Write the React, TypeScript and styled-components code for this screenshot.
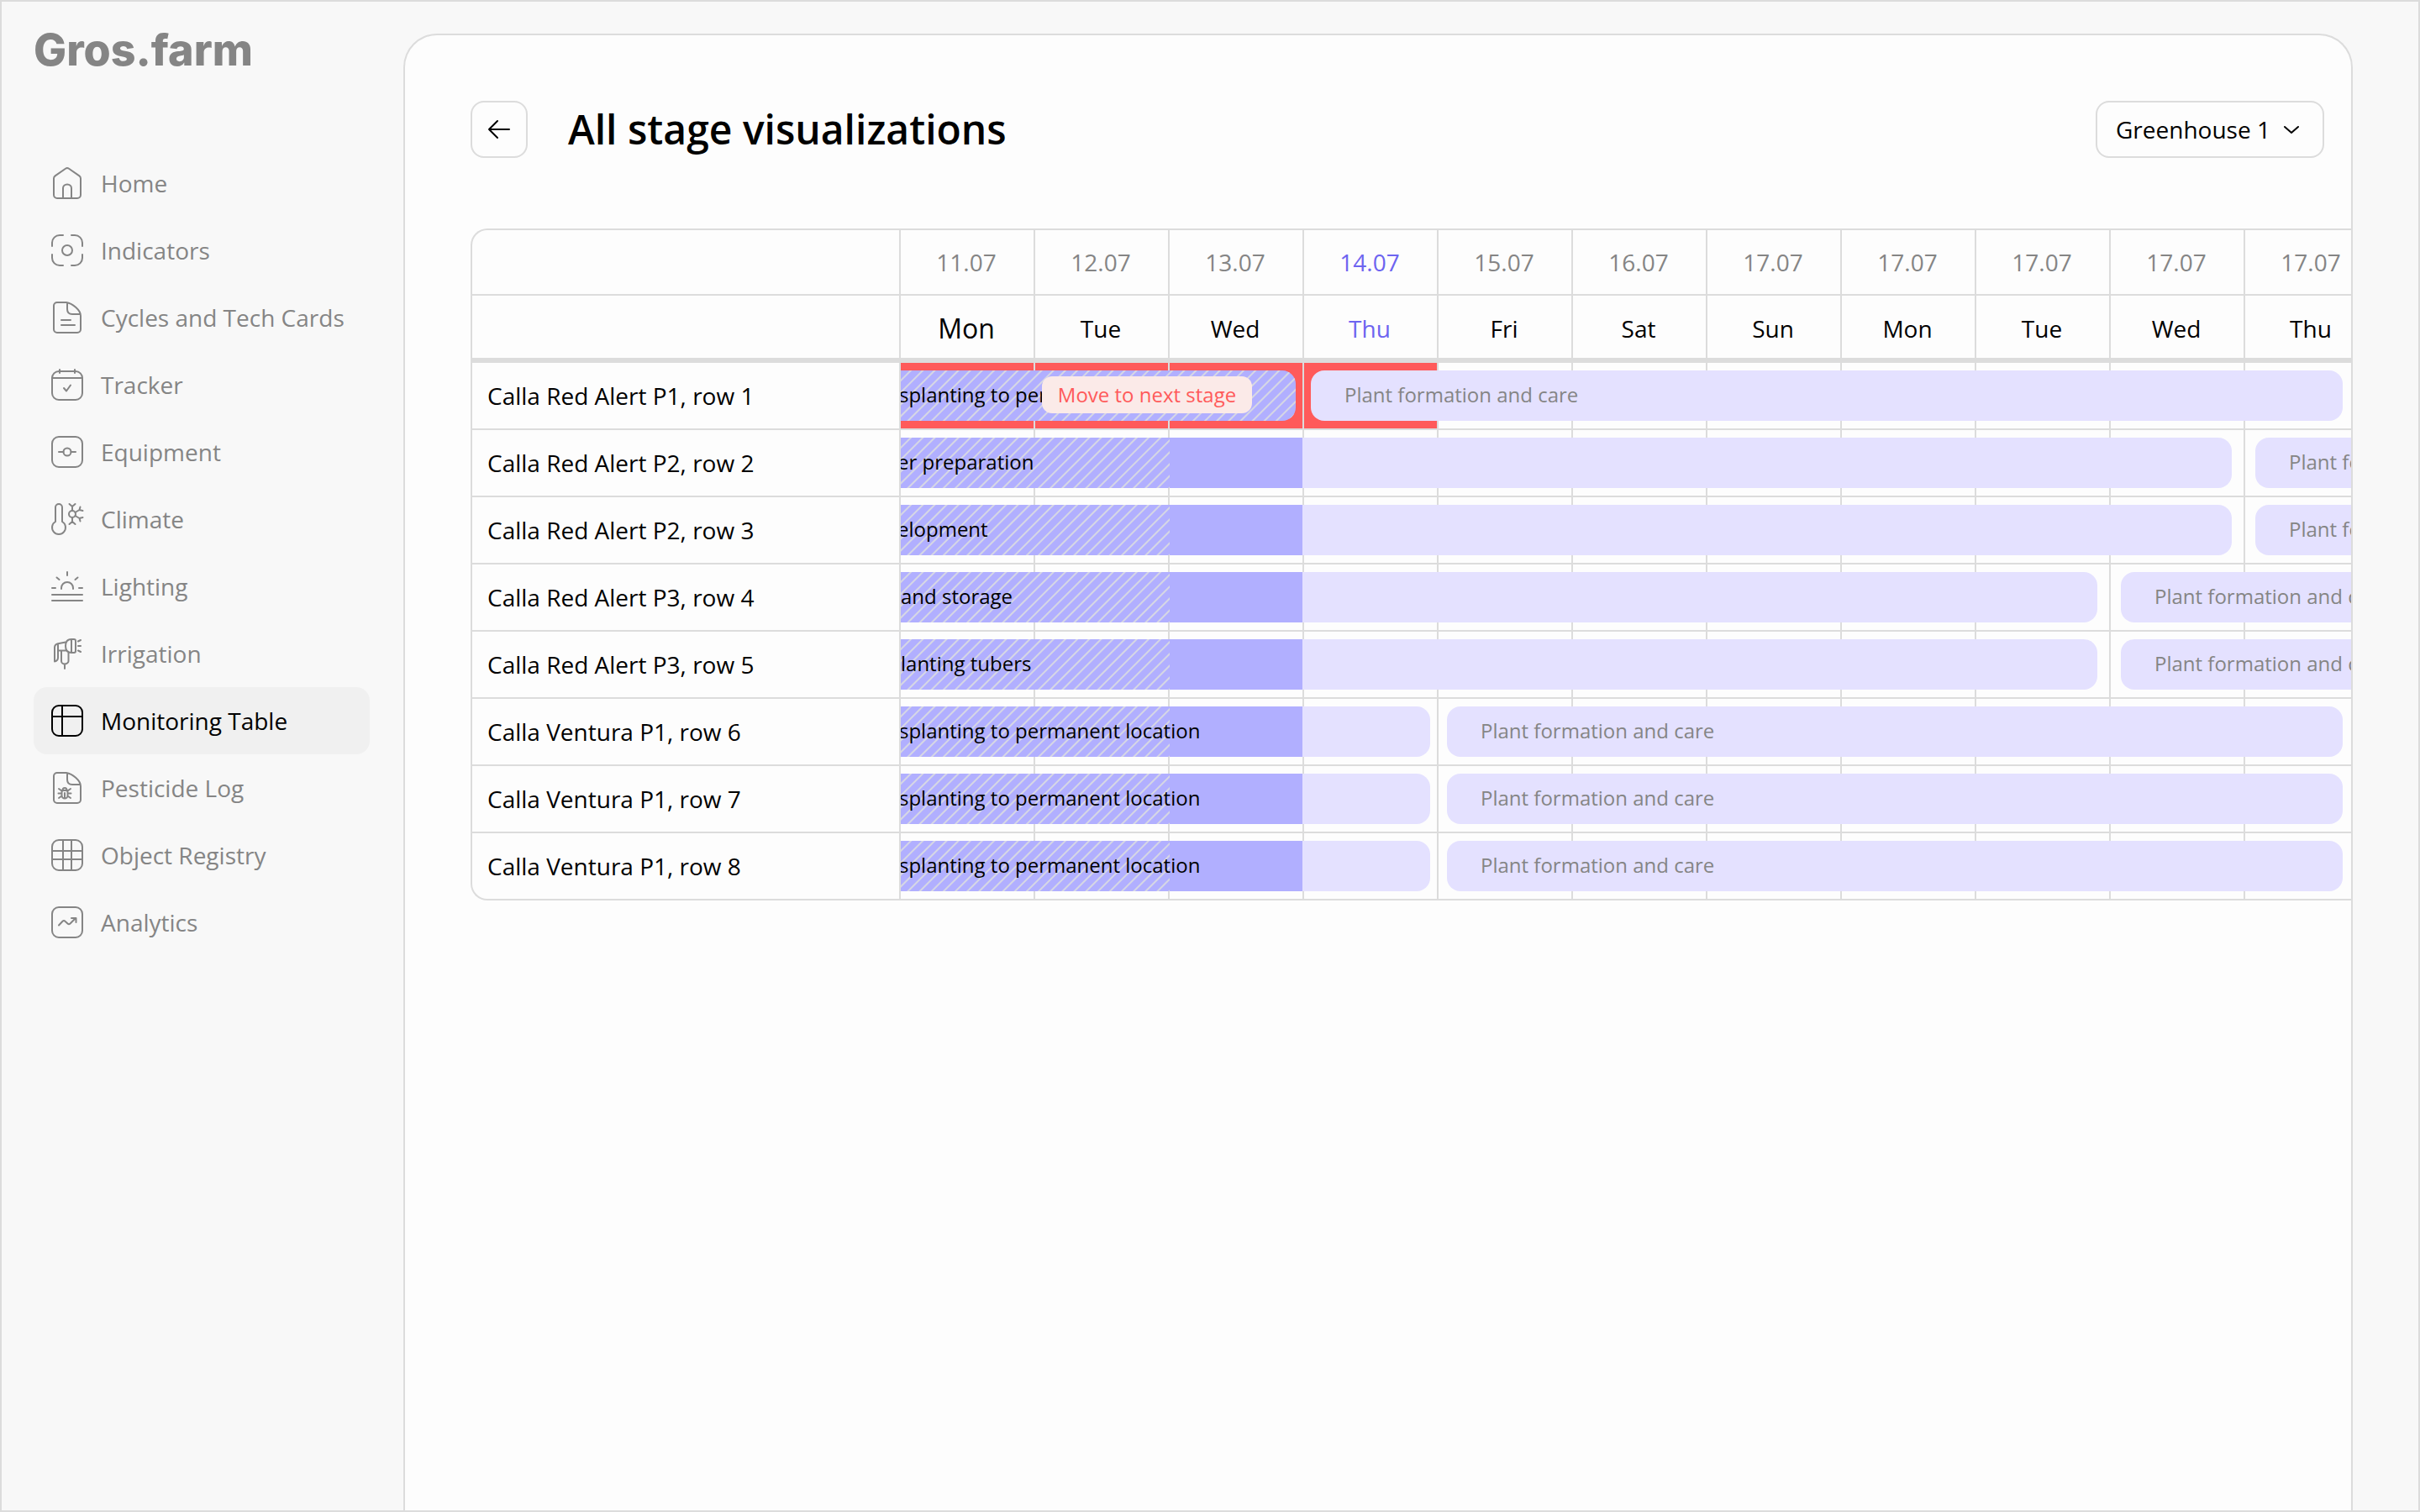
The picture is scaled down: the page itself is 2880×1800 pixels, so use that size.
import React from "react";
import styled, { createGlobalStyle, css } from "styled-components";

const color = {
  page: "#f8f8f8",
  panel: "#fdfdfd",
  line: "#dcdcdc",
  muted: "#858585",
  ink: "#000000",
  active: "#f0f0f0",
  accent: "#6d64f0",
  done: "#b1afff",
  planned: "#e4e1ff",
  alert: "#ff5a5a",
  alertSoft: "#fbeae8",
};

const GlobalStyle = createGlobalStyle`
  *, *::before, *::after { box-sizing: border-box; }
  body {
    margin: 0;
    background: ${color.page};
    color: ${color.ink};
    font-family: "Open Sans", "Noto Sans", sans-serif;
    font-size: 28px;
    line-height: 40px;
  }
  button, select { font: inherit; color: inherit; }
`;

const Shell = styled.div`
  display: flex;
  min-height: 100vh;
  border: 2px solid ${color.line};
  padding: 38px 78px 0 38px;
`;

const Sidebar = styled.aside`
  flex: none;
  width: 400px;
  margin-right: 40px;
`;

const Logo = styled.a`
  display: block;
  margin-bottom: 98px;
  color: ${color.muted};
  font-family: "Inter", sans-serif;
  font-size: 52px;
  font-weight: 800;
  line-height: 40px;
  text-decoration: none;
`;

const NavList = styled.ul`
  margin: 0;
  padding: 0;
  list-style: none;
`;

const NavLink = styled.a<{ $active: boolean }>`
  display: flex;
  align-items: center;
  gap: 20px;
  height: 80px;
  padding: 0 20px;
  border-radius: 16px;
  color: ${(p) => (p.$active ? color.ink : color.muted)};
  background: ${(p) => (p.$active ? color.active : "transparent")};
  text-decoration: none;
`;

const Glyph = styled.svg`
  flex: none;
  fill: none;
  stroke: currentColor;
  stroke-width: 2;
  stroke-linecap: round;
  stroke-linejoin: round;
`;

const Panel = styled.main`
  flex: 1;
  min-width: 0;
  border: 2px solid ${color.line};
  border-bottom: 0;
  border-radius: 40px 40px 0 0;
  background: ${color.panel};
  padding: 78px 0 0 78px;
`;

const PanelHeader = styled.header`
  display: flex;
  align-items: center;
  margin: 0 32px 84px 0;
`;

const BackButton = styled.button`
  display: grid;
  place-items: center;
  width: 68px;
  height: 68px;
  padding: 0;
  border: 2px solid ${color.line};
  border-radius: 16px;
  background: none;
`;

const Title = styled.h1`
  flex: 1;
  margin: 0 0 0 48px;
  font-size: 48px;
  font-weight: 600;
  line-height: 60px;
`;

const SelectBox = styled.label`
  display: grid;
  align-items: center;
  width: 272px;
  height: 68px;
  border: 2px solid ${color.line};
  border-radius: 16px;

  & > * { grid-area: 1 / 1; }
  & > svg { justify-self: end; margin-right: 28px; pointer-events: none; }
`;

const Select = styled.select`
  width: 100%;
  height: 100%;
  padding: 0 60px 0 22px;
  border: 0;
  border-radius: 16px;
  background: none;
  appearance: none;
`;

const TableFrame = styled.div`
  overflow: hidden;
  border: 2px solid ${color.line};
  border-right: 0;
  border-radius: 20px 0 0 20px;
`;

const Table = styled.table`
  table-layout: fixed;
  width: 2270px;
  border-collapse: separate;
  border-spacing: 0;
`;

const NameCol = styled.col`
  width: 510px;
`;

const DayCol = styled.col`
  width: 160px;
`;

const HeadCell = styled.th<{ $tone?: "muted" | "today"; $large?: boolean; $last?: boolean }>`
  height: ${(p) => (p.$last ? 80 : 78)}px;
  padding: ${(p) => (p.$last ? "4px 2px 0 0" : "0 2px 0 0")};
  border-right: 2px solid ${color.line};
  border-bottom: ${(p) => (p.$last ? 6 : 2)}px solid ${color.line};
  color: ${(p) => (p.$tone === "today" ? color.accent : p.$tone === "muted" ? color.muted : color.ink)};
  font-size: ${(p) => (p.$large ? 32 : 28)}px;
  font-weight: 400;
  text-align: center;
`;

const rowLine = css`
  border-bottom: 2px solid ${color.line};
  tr:last-child > & { border-bottom: 0; }
`;

const NameCell = styled.th`
  padding: 0 18px;
  border-right: 2px solid ${color.line};
  font-weight: 400;
  text-align: left;
  white-space: nowrap;
  ${rowLine}
`;

const TrackCell = styled.td`
  padding: 0;
  ${rowLine}
`;

const Track = styled.div`
  display: grid;
  grid-template-columns: repeat(11, 160px);
  align-items: center;
  height: 78px;
  overflow: hidden;
`;

const Slot = styled.div<{ $col: number; $late: boolean }>`
  grid-area: 1 / ${(p) => p.$col};
  height: 100%;
  border-right: 2px solid ${color.line};
  background: ${(p) => (p.$late ? color.alert : "transparent")};
`;

const Bar = styled.div<{ $from: number; $to: number; $inset: string; $round: string }>`
  grid-area: 1 / ${(p) => p.$from} / 2 / ${(p) => p.$to};
  display: grid;
  grid-template-columns: subgrid;
  height: 60px;
  margin: ${(p) => p.$inset};
  border-radius: ${(p) => p.$round};
  overflow: hidden;
  background: ${color.planned};
`;

const Elapsed = styled.div<{ $to: number }>`
  grid-area: 1 / 1 / 2 / ${(p) => p.$to};
  margin-right: 2px;
  background-color: ${color.done};
`;

const Hatched = styled.div<{ $to: number }>`
  grid-area: 1 / 1 / 2 / ${(p) => p.$to};
  background-color: ${color.done};
  background-image: repeating-linear-gradient(
    135deg,
    transparent 0 7px,
    #d6d7e4 8px 9px,
    transparent 10px
  );
`;

const BarContent = styled.div<{ $muted: boolean }>`
  grid-area: 1 / 1 / 2 / -1;
  display: flex;
  align-items: center;
  min-width: 0;
  padding: 0 0 2px ${(p) => (p.$muted ? 40 : 0)}px;
  color: ${(p) => (p.$muted ? color.muted : color.ink)};
  font-size: 24px;
`;

const Label = styled.span<{ $scrolled: number }>`
  flex: 1;
  min-width: 0;
  overflow: hidden;
  text-indent: -${(p) => p.$scrolled}px;
  white-space: nowrap;
`;

const MoveButton = styled.button`
  flex: none;
  width: 250px;
  height: 44px;
  margin-right: 52px;
  padding: 0;
  border: 0;
  border-radius: 12px;
  background: ${color.alertSoft};
  color: ${color.alert};
  line-height: 40px;
  white-space: nowrap;
`;

const docOutline = "M8 2h11c7 1 17 9 17 16v16a4 4 0 0 1-4 4H8a4 4 0 0 1-4-4V6a4 4 0 0 1 4-4zM20 3v7c0 4 2 6 6 6h9";
const box = <rect x="2" y="2" width="36" height="36" rx="8" />;

const nav: { label: string; icon: React.ReactNode }[] = [
  {
    label: "Home",
    icon: <path d="M4 14.500c0-1.400.5-2.300 1.600-3.100L18 2.700a3.400 3.400 0 0 1 4 0l12.400 8.700c1.100.8 1.600 1.700 1.600 3.100V34a4 4 0 0 1-4 4H8a4 4 0 0 1-4-4zM15 38V26a5 4.500 0 0 1 10 0v12" />,
  },
  {
    label: "Indicators",
    icon: (
      <>
        <path d="M2 15v-4a9 9 0 0 1 9-9h4M25 2h4a9 9 0 0 1 9 9v4M38 25v4a9 9 0 0 1-9 9h-4M15 38h-4a9 9 0 0 1-9-9v-4" />
        <circle cx="20" cy="20" r="6" />
      </>
    ),
  },
  { label: "Cycles and Tech Cards", icon: <path d={docOutline + "M13 23h11M13 29h16"} /> },
  {
    label: "Tracker",
    icon: (
      <>
        <rect x="2" y="4" width="36" height="34" rx="8" />
        <path d="M2 12h36M11 2v4M29 2v4M16 24l3 3.500 5-7" />
      </>
    ),
  },
  {
    label: "Equipment",
    icon: (
      <>
        {box}
        <circle cx="20" cy="20" r="4.500" />
        <path d="M10 20h5.500M24.500 20H30" />
      </>
    ),
  },
  {
    label: "Climate",
    icon: (
      <>
        <path d="M6 23V6a4 4 0 0 1 8 0v17a8 8 0 1 1-8 0" />
        <circle cx="26" cy="14" r="4" />
        <path d="M26 10V5M22.500 2 26 5l3.500-3M26 18v5M22.500 26l3.500-3 3.500 3M29.500 12l5-3M35.500 5.500l-1 3.500 4 1M29.500 16l5 3M35.500 22.500l-1-3.500 4-1" />
      </>
    ),
  },
  {
    label: "Lighting",
    icon: <path d="M13 23v-1a7 7 0 0 1 14 0v1M20 3v4M7.500 9.500l3 2.500M32.500 9.500l-3 2.500M2 22h4M34 22h4M2 30h36M2 37h36" />,
  },
  {
    label: "Irrigation",
    icon: <path d="M25 3h3a2 2 0 0 1 2 2v12a2 2 0 0 1-2 2h-3zM25 3c-5 0-7 3.500-7 8s2 8 7 8M18 6.500 9 8.300C6 9 5 10.500 5 13v16.500c2-.5 4-2 4-4.500V8.300M9 16.500h9.500M13 16.500V29c0 2 2 3.500 4 3.500s4.500-1.500 4.500-3.500V18M17 33v5M33 5.500l3-1.500M33 11h3M33 16.500l3 1.500" />,
  },
  {
    label: "Monitoring Table",
    icon: (
      <>
        {box}
        <path d="M14 2v36M2 15h36" />
      </>
    ),
  },
  {
    label: "Pesticide Log",
    icon: <path d={docOutline + "M13.500 25c0-1.500 1-2 2-2h3c1 0 2 .5 2 2v4a3.500 3.500 0 0 1-7 0zM14.500 23a2.500 3 0 0 1 5 0M17 26v6M10 21l3.500 2.500M24 21l-3.500 2.500M9.500 26.500h4M20.500 26.500h4M10 32l3.500-2.500M24 32l-3.500-2.500"} />,
  },
  {
    label: "Object Registry",
    icon: (
      <>
        {box}
        <path d="M15 2v36M25 2v36M2 15h36M2 25h36" />
      </>
    ),
  },
  {
    label: "Analytics",
    icon: (
      <>
        {box}
        <path d="M10 23.500l4.500-4.800c1-1 2-1 3 0l3 2.800c1 .9 2 .9 3 0l6.500-6.500M25 15h5.500v5" />
      </>
    ),
  },
];

const days = [
  ["11.07", "Mon"],
  ["12.07", "Tue"],
  ["13.07", "Wed"],
  ["14.07", "Thu"],
  ["15.07", "Fri"],
  ["16.07", "Sat"],
  ["17.07", "Sun"],
  ["17.07", "Mon"],
  ["17.07", "Tue"],
  ["17.07", "Wed"],
  ["17.07", "Thu"],
];
const today = 3;

type Stage = {
  label: string;
  /* first and last grid lines of the stage */
  from: number;
  to: number;
  /* gap kept before and after the bar, in pixels */
  before?: number;
  after?: number;
  /* part of the label that is scrolled out of view, in pixels */
  scrolled?: number;
  state: "late" | "current" | "next";
};

const next = "Plant formation and care";
const moving = "splanting to permanent location";

const short = (name: string) => ({
  name,
  stages: [
    { label: moving, from: 1, to: 5, after: 10, scrolled: 2, state: "current" },
    { label: next, from: 5, to: 12, before: 10, after: 44, state: "next" },
  ] as Stage[],
});

const long = (name: string, label: string, end: number, scrolled = 0) => ({
  name,
  stages: [
    { label, from: 1, to: end, after: 16, scrolled, state: "current" },
    { label: next, from: end, to: 12, before: 12, state: "next" },
  ] as Stage[],
});

const rows: { name: string; stages: Stage[]; late?: number }[] = [
  {
    name: "Calla Red Alert P1, row 1",
    late: 4,
    stages: [
      { label: moving, from: 1, to: 4, after: 10, scrolled: 2, state: "late" },
      { label: next, from: 4, to: 12, before: 8, after: 44, state: "next" },
    ],
  },
  long("Calla Red Alert P2, row 2", "er preparation", 11, 4),
  long("Calla Red Alert P2, row 3", "elopment", 11, 4),
  long("Calla Red Alert P3, row 4", "and storage", 10),
  long("Calla Red Alert P3, row 5", "lanting tubers", 10),
  short("Calla Ventura P1, row 6"),
  short("Calla Ventura P1, row 7"),
  short("Calla Ventura P1, row 8"),
];

function StageBar({ stage }: { stage: Stage }) {
  const started = stage.state !== "next";
  return (
    <Bar
      $from={stage.from}
      $to={stage.to}
      $inset={`0 ${stage.after ?? 0}px 0 ${stage.before ?? 0}px`}
      $round={started ? "0 16px 16px 0" : "16px"}
    >
      {stage.state === "current" && <Elapsed $to={4} />}
      {started && <Hatched $to={stage.state === "late" ? -1 : 3} />}
      <BarContent $muted={!started}>
        <Label $scrolled={stage.scrolled ?? 0}>{stage.label}</Label>
        {stage.state === "late" && <MoveButton type="button">Move to next stage</MoveButton>}
      </BarContent>
    </Bar>
  );
}

export default function App() {
  return (
    <>
      <GlobalStyle />
      <Shell>
        <Sidebar>
          <Logo href="#home">Gros.farm</Logo>
          <nav aria-label="Main">
            <NavList>
              {nav.map((item) => {
                const active = item.label === "Monitoring Table";
                return (
                  <li key={item.label}>
                    <NavLink href="#" $active={active} aria-current={active ? "page" : undefined}>
                      <Glyph width="40" height="40" viewBox="0 0 40 40" aria-hidden="true">
                        {item.icon}
                      </Glyph>
                      {item.label}
                    </NavLink>
                  </li>
                );
              })}
            </NavList>
          </nav>
        </Sidebar>
        <Panel>
          <PanelHeader>
            <BackButton type="button" aria-label="Back">
              <Glyph width="28" height="28" viewBox="0 0 28 28" aria-hidden="true">
                <path d="M2 14h24M12 4 2 14l10 10" />
              </Glyph>
            </BackButton>
            <Title>All stage visualizations</Title>
            <SelectBox>
              <Select aria-label="Greenhouse">
                <option>Greenhouse 1</option>
              </Select>
              <Glyph width="18" height="18" viewBox="0 0 18 18" aria-hidden="true">
                <path d="M1 6l8 7 8-7" />
              </Glyph>
            </SelectBox>
          </PanelHeader>
          <TableFrame>
            <Table>
              <colgroup>
                <NameCol />
                {days.map((_, i) => (
                  <DayCol key={i} />
                ))}
              </colgroup>
              <thead>
                <tr>
                  <HeadCell as="td" />
                  {days.map(([date], i) => (
                    <HeadCell key={i} scope="col" $tone={i === today ? "today" : "muted"}>
                      {date}
                    </HeadCell>
                  ))}
                </tr>
                <tr>
                  <HeadCell as="td" $last />
                  {days.map(([, day], i) => (
                    <HeadCell key={i} scope="col" $last $large={i === 0} $tone={i === today ? "today" : undefined}>
                      {day}
                    </HeadCell>
                  ))}
                </tr>
              </thead>
              <tbody>
                {rows.map((row) => (
                  <tr key={row.name}>
                    <NameCell scope="row">{row.name}</NameCell>
                    <TrackCell colSpan={days.length}>
                      <Track>
                        {days.map((_, i) => (
                          <Slot key={i} $col={i + 1} $late={i < (row.late ?? 0)} />
                        ))}
                        {row.stages.map((stage) => (
                          <StageBar key={stage.from} stage={stage} />
                        ))}
                      </Track>
                    </TrackCell>
                  </tr>
                ))}
              </tbody>
            </Table>
          </TableFrame>
        </Panel>
      </Shell>
    </>
  );
}
